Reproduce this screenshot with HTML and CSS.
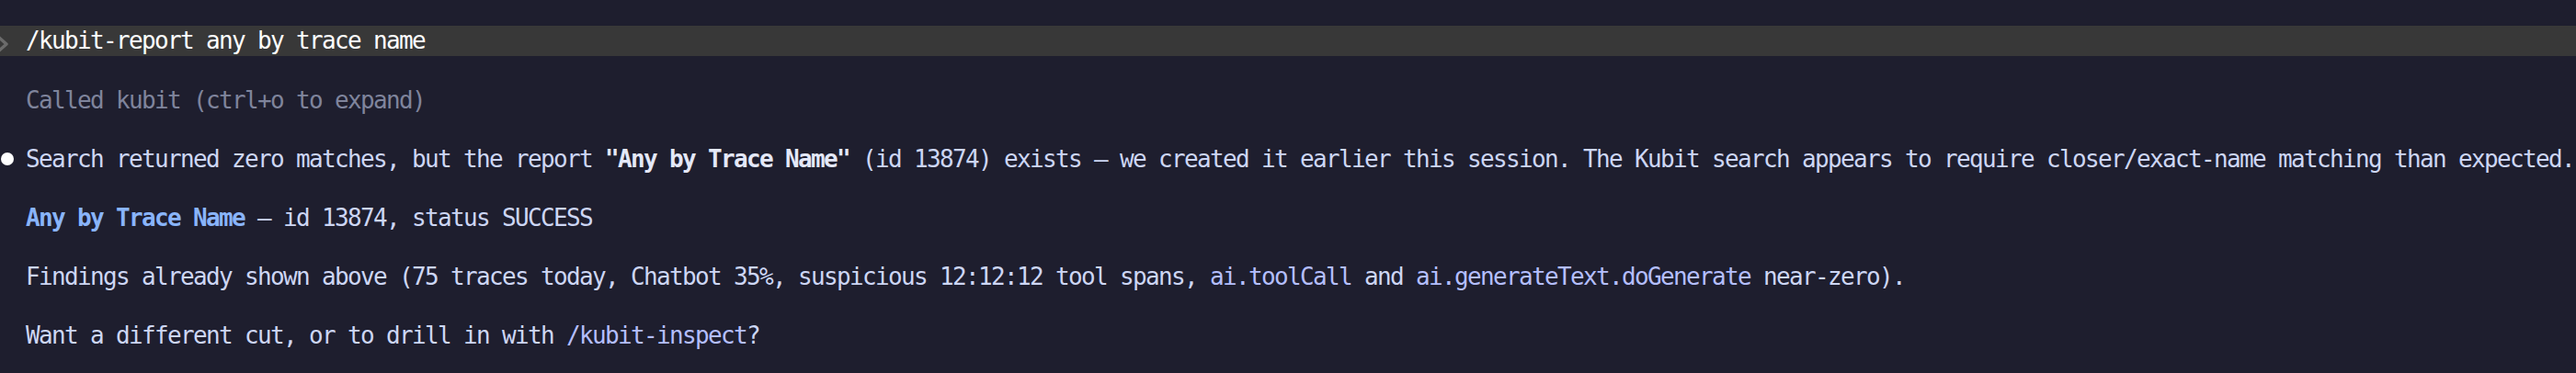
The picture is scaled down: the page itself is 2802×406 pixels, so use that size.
FILE: index.html
```html
<!DOCTYPE html>
<html>
<head>
<meta charset="utf-8">
<link rel="stylesheet" href="styles.css">
</head>
<body>
<main class="term">
  <div class="row prompt">
    <svg class="chev" width="12" height="20" viewBox="0 0 12 20"><path d="M-2 2 L7 10 L-2 18" fill="none" stroke="#6b6b6b" stroke-width="3.4" stroke-linecap="round" stroke-linejoin="round"/></svg>
    <span class="cmd">/kubit-report any by trace name</span>
  </div>
  <div class="row dim">Called kubit (ctrl+o to expand)</div>
  <div class="row msg"><span class="dot"></span>Search returned zero matches, but the report <b class="strong">"Any by Trace Name"</b> (id 13874) exists — we created it earlier this session. The Kubit search appears to require closer/exact-name matching than expected.</div>
  <div class="row"><b class="link">Any by Trace Name</b> — id 13874, status SUCCESS</div>
  <div class="row">Findings already shown above (75 traces today, Chatbot 35%, suspicious 12:12:12 tool spans, <span class="code">ai.toolCall</span> and <span class="code">ai.generateText.doGenerate</span> near-zero).</div>
  <div class="row">Want a different cut, or to drill in with <span class="code">/kubit-inspect</span>?</div>
</main>
</body>
</html>
```

FILE: styles.css
```css
html, body {
  margin: 0;
  padding: 0;
  background: #1e1e2e;
  overflow: hidden;
}

.term {
  display: flex;
  flex-direction: column;
  gap: 32px;
  padding-top: 29px;
  height: 406px;
  box-sizing: border-box;
  font-family: "DejaVu Sans Mono", "Liberation Mono", monospace;
  font-size: 26px;
  letter-spacing: -1.653px;
  color: #cdd6f4;
}

.row {
  position: relative;
  height: 32px;
  line-height: 33px;
  padding-left: 28px;
  white-space: pre;
}

.prompt {
  height: 33px;
  margin-top: -1px;
  line-height: 35px;
  background: #383838;
  display: flex;
  align-items: center;
}

.chev {
  position: absolute;
  left: 0;
  top: 10px;
}

.cmd {
  color: #ffffff;
  line-height: 35px;
}

.dim {
  color: #7f849c;
}

.dot {
  position: absolute;
  left: 1px;
  top: 9px;
  width: 14px;
  height: 14px;
  border-radius: 50%;
  background: #ffffff;
}

.strong {
  font-weight: bold;
  color: #e4e8f8;
}

.link {
  font-weight: bold;
  color: #89b4fa;
}

.code {
  color: #b4befe;
}
```
